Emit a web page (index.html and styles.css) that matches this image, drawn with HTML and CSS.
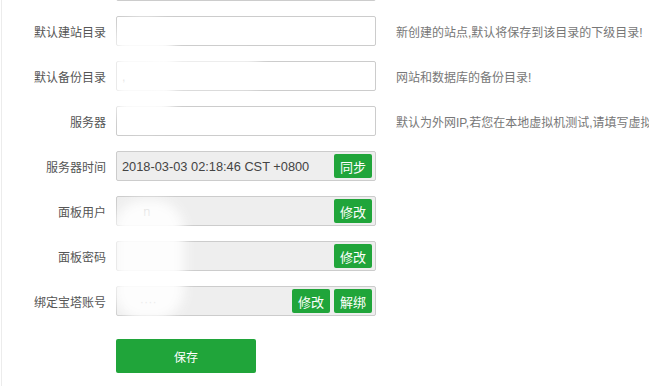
FILE: index.html
```html
<!DOCTYPE html>
<html lang="zh-CN">
<head>
  <meta charset="UTF-8">
  <title>面板设置</title>
  <link rel="stylesheet" href="styles.css">
</head>
<body>
  <div class="panel">
    <div class="setting-form">
      <div class="line">
        <span class="tname"></span>
        <div class="info-r"><input class="bt-input" type="text" value=""></div>
      </div>
      <div class="line">
        <span class="tname">默认建站目录</span>
        <div class="info-r"><input class="bt-input" type="text" value=""></div>
        <span class="tips">新创建的站点,默认将保存到该目录的下级目录!</span>
      </div>
      <div class="line">
        <span class="tname">默认备份目录</span>
        <div class="info-r"><input class="bt-input" type="text" value=","></div>
        <span class="tips">网站和数据库的备份目录!</span>
      </div>
      <div class="line">
        <span class="tname">服务器</span>
        <div class="info-r"><input class="bt-input" type="text" value=""></div>
        <span class="tips">默认为外网IP,若您在本地虚拟机测试,请填写虚拟机IP!</span>
      </div>
      <div class="line">
        <span class="tname">服务器时间</span>
        <div class="info-r">
          <input class="bt-input disabled" type="text" value="2018-03-03 02:18:46 CST +0800" disabled>
          <div class="btn-group"><button class="btn-mini">同步</button></div>
        </div>
      </div>
      <div class="line">
        <span class="tname">面板用户</span>
        <div class="info-r">
          <input class="bt-input disabled" type="text" value="      n" disabled>
          <div class="btn-group"><button class="btn-mini">修改</button></div>
        </div>
      </div>
      <div class="line">
        <span class="tname">面板密码</span>
        <div class="info-r">
          <input class="bt-input disabled" type="text" value="" disabled>
          <div class="btn-group"><button class="btn-mini">修改</button></div>
        </div>
      </div>
      <div class="line">
        <span class="tname">绑定宝塔账号</span>
        <div class="info-r">
          <input class="bt-input disabled" type="text" value="     ····" disabled>
          <div class="btn-group">
            <button class="btn-mini">修改</button>
            <button class="btn-mini">解绑</button>
          </div>
        </div>
      </div>
      <div class="line">
        <span class="tname"></span>
        <button class="btn-save">保存</button>
      </div>
    </div>

    <!-- 打码区域 -->
    <div class="smudge s1"></div>
    <div class="smudge s2"></div>
    <div class="smudge s3"></div>
  </div>
</body>
</html>
```

FILE: styles.css
```css
body {
  margin: 0;
  font-family: "Liberation Sans", "Noto Sans CJK SC", sans-serif;
  font-size: 12px;
  color: #555;
  background: #fff;
  overflow: hidden;
}

.panel {
  position: relative;
  height: 386px;
  margin-left: 1px;
  border-left: 1px solid #ececec;
  overflow: hidden;
}

.setting-form {
  margin-top: -29px;
}

.line {
  display: flex;
  align-items: center;
  height: 30px;
  margin-bottom: 15px;
  white-space: nowrap;
}

.tname {
  width: 104px;
  flex-shrink: 0;
  padding-right: 10px;
  text-align: right;
  color: #555;
}

.info-r {
  position: relative;
  width: 260px;
  flex-shrink: 0;
}

.bt-input {
  display: block;
  box-sizing: border-box;
  width: 260px;
  height: 30px;
  padding: 0 5px;
  border: 1px solid #ccc;
  border-radius: 2px;
  background: #fff;
  font-family: inherit;
  font-size: 12.8px;
  color: #444;
  outline: none;
}

.bt-input.disabled {
  background: #eee;
  color: #444;
}

.btn-group {
  position: absolute;
  top: 3px;
  right: 4px;
  display: flex;
  gap: 4px;
}

.btn-mini {
  height: 24px;
  padding: 0 6px;
  border: none;
  border-radius: 2px;
  background: #20a53a;
  color: #fff;
  font-family: inherit;
  font-size: 13px;
  cursor: pointer;
}

.tips {
  margin-left: 20px;
  color: #777;
}

.btn-save {
  width: 140px;
  height: 34px;
  margin-top: 20px;
  border: none;
  border-radius: 2px;
  background: #20a53a;
  color: #fff;
  font-family: inherit;
  font-size: 12px;
  cursor: pointer;
}

.smudge {
  position: absolute;
  background: #fff;
  filter: blur(6px);
  opacity: 0.9;
}

.s1 {
  left: 112px;
  top: 18px;
  width: 60px;
  height: 110px;
  border-radius: 30px;
}

.s2 {
  left: 150px;
  top: 58px;
  width: 110px;
  height: 30px;
  border-radius: 15px;
}

.s3 {
  left: 112px;
  top: 200px;
  width: 70px;
  height: 120px;
  border-radius: 30px;
}
```
